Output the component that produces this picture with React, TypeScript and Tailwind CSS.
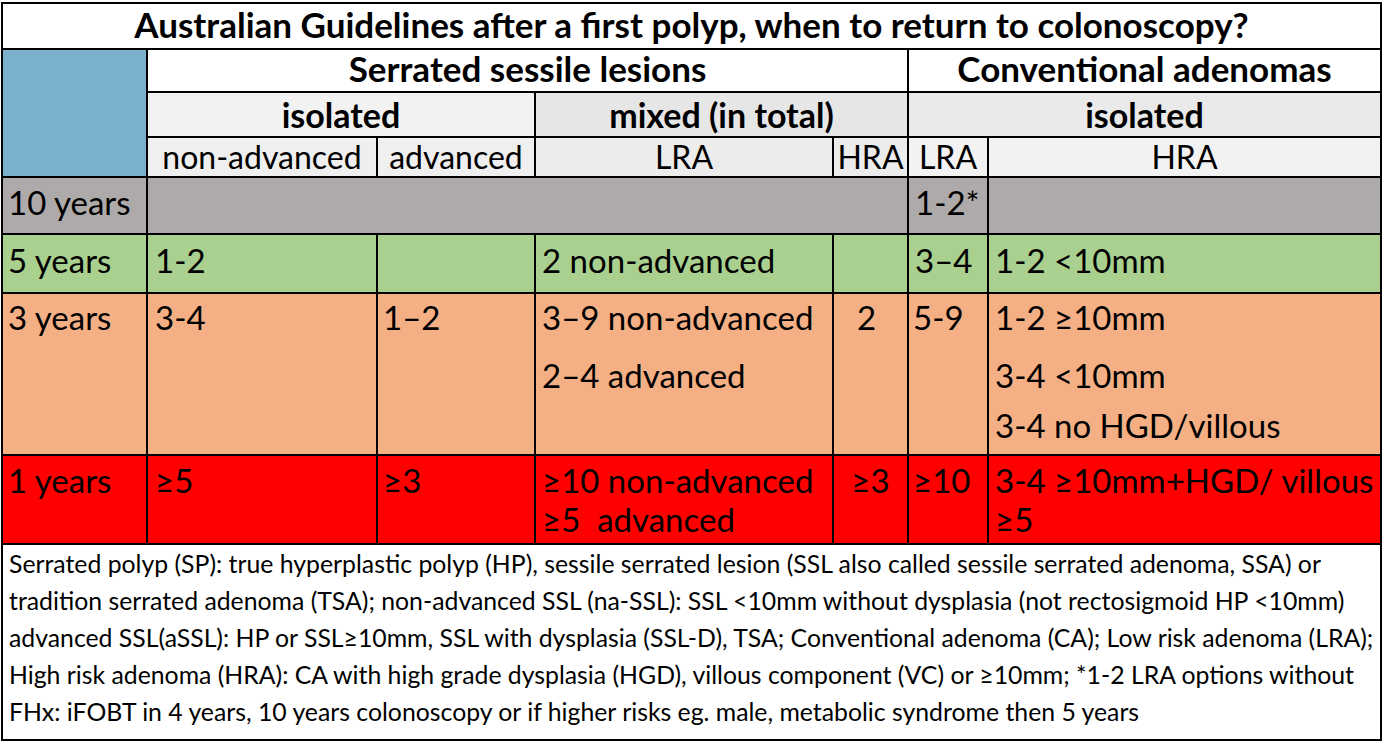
const cell = "border-2 border-black align-top";
const head = "border-2 border-black text-center align-middle font-bold leading-none";

export default function App() {
  return (
    <div className="min-h-screen bg-white pt-[2px] pl-px font-[Lato,sans-serif] text-black">
      <table className="w-[1381px] table-fixed border-collapse border-2 border-black">
        <colgroup>
          <col className="w-[145px]" />
          <col className="w-[230px]" />
          <col className="w-[158px]" />
          <col className="w-[298px]" />
          <col className="w-[75px]" />
          <col className="w-[80px]" />
          <col className="w-[393px]" />
        </colgroup>
        <tbody>
          {/* titre */}
          <tr className="h-[46px]">
            <td colSpan={7} className={`${head} bg-white pb-[4px] text-[35px]`}>
              Australian Guidelines after a first polyp, when to return to colonoscopy?
            </td>
          </tr>

          {/* en-têtes */}
          <tr className="h-[43px]">
            <td rowSpan={3} className="border-2 border-black bg-[#7cb1cd]" />
            <td colSpan={4} className={`${head} bg-white pb-[4px] text-[35px]`}>
              Serrated sessile lesions
            </td>
            <td colSpan={2} className={`${head} bg-white pb-[4px] text-[35px]`}>
              Conventional adenomas
            </td>
          </tr>
          <tr className="h-[45px]">
            <td colSpan={2} className={`${head} bg-[#f2f2f2] text-[34px]`}>
              isolated
            </td>
            <td colSpan={2} className={`${head} bg-[#e7e6e6] text-[34px]`}>
              mixed (in total)
            </td>
            <td colSpan={2} className={`${head} bg-[#eaeaea] text-[34px]`}>
              isolated
            </td>
          </tr>
          <tr className="h-[40px] text-center align-middle text-[32px] leading-none">
            <td className="border-2 border-black bg-[#efefef]">non-advanced</td>
            <td className="border-2 border-black bg-[#efefef]">advanced</td>
            <td className="border-2 border-black bg-[#ececec]">LRA</td>
            <td className="border-2 border-black bg-[#ececec]">HRA</td>
            <td className="border-2 border-black bg-[#f2f2f2]">LRA</td>
            <td className="border-2 border-black bg-[#f2f2f2]">HRA</td>
          </tr>

          {/* 10 ans */}
          <tr className="h-[57px] bg-[#aeaaaa] text-[33px] leading-[40px]">
            <td className={`${cell} pl-[5px] pt-[4px]`}>10 years</td>
            <td colSpan={4} className={cell} />
            <td className={`${cell} pl-[6px] pt-[4px]`}>1-2*</td>
            <td className={cell} />
          </tr>

          {/* 5 ans */}
          <tr className="h-[59px] bg-[#a9d08e] text-[33px] leading-[40px]">
            <td className={`${cell} pl-[5px] pt-[5px]`}>5 years</td>
            <td className={`${cell} pl-[7px] pt-[5px]`}>1-2</td>
            <td className={cell} />
            <td className={`${cell} pl-[6px] pt-[5px]`}>2 non-advanced</td>
            <td className={cell} />
            <td className={`${cell} pl-[6px] pt-[5px]`}>3–4</td>
            <td className={`${cell} pl-[6px] pt-[5px]`}>1-2 &lt;10mm</td>
          </tr>

          {/* 3 ans */}
          <tr className="h-[162px] bg-[#f4b084] text-[33px] leading-[40px]">
            <td className={`${cell} pl-[5px] pt-[3px]`}>3 years</td>
            <td className={`${cell} pl-[7px] pt-[3px]`}>3-4</td>
            <td className={`${cell} pl-[5px] pt-[3px]`}>1–2</td>
            <td className={`${cell} pl-[6px] pt-[3px]`}>
              <div>3–9 non-advanced</div>
              <div className="mt-[18px]">2–4 advanced</div>
            </td>
            <td className={`${cell} pr-[8px] pt-[3px] text-center`}>2</td>
            <td className={`${cell} pl-[4px] pt-[3px]`}>5-9</td>
            <td className={`${cell} pl-[6px] pt-[3px]`}>
              <div>1-2 ≥10mm</div>
              <div className="mt-[18px]">3-4 &lt;10mm</div>
              <div className="mt-[10px]">3-4 no HGD/villous</div>
            </td>
          </tr>

          {/* 1 an */}
          <tr className="h-[89px] bg-[#ff0000] text-[33px] leading-[40px]">
            <td className={`${cell} pl-[5px] pt-[4px]`}>1 years</td>
            <td className={`${cell} pl-[7px] pt-[4px]`}>≥5</td>
            <td className={`${cell} pl-[5px] pt-[4px]`}>≥3</td>
            <td className={`${cell} pl-[6px] pt-[4px]`}>
              <div>≥10 non-advanced</div>
              <div className="-mt-[1px] whitespace-pre">≥5  advanced</div>
            </td>
            <td className={`${cell} pt-[4px] text-center`}>≥3</td>
            <td className={`${cell} pl-[4px] pt-[4px]`}>≥10</td>
            <td className={`${cell} pl-[6px] pt-[4px]`}>
              <div>3-4 ≥10mm+HGD/ villous</div>
              <div className="-mt-[1px]">≥5</div>
            </td>
          </tr>

          {/* notes */}
          <tr className="h-[196px]">
            <td colSpan={7} className={`${cell} bg-white pl-[6px] pt-0 text-[24.8px] leading-[37px]`}>
              Serrated polyp (SP): true hyperplastic polyp (HP), sessile serrated lesion (SSL also called sessile serrated adenoma, SSA) or
              <br />
              tradition serrated adenoma (TSA); non-advanced SSL (na-SSL): SSL &lt;10mm without dysplasia (not rectosigmoid HP &lt;10mm)
              <br />
              advanced SSL(aSSL): HP or SSL≥10mm, SSL with dysplasia (SSL-D), TSA; Conventional adenoma (CA); Low risk adenoma (LRA);
              <br />
              High risk adenoma (HRA): CA with high grade dysplasia (HGD), villous component (VC) or ≥10mm; *1-2 LRA options without
              <br />
              FHx: iFOBT in 4 years, 10 years colonoscopy or if higher risks eg. male, metabolic syndrome then 5 years
            </td>
          </tr>
        </tbody>
      </table>
    </div>
  );
}
